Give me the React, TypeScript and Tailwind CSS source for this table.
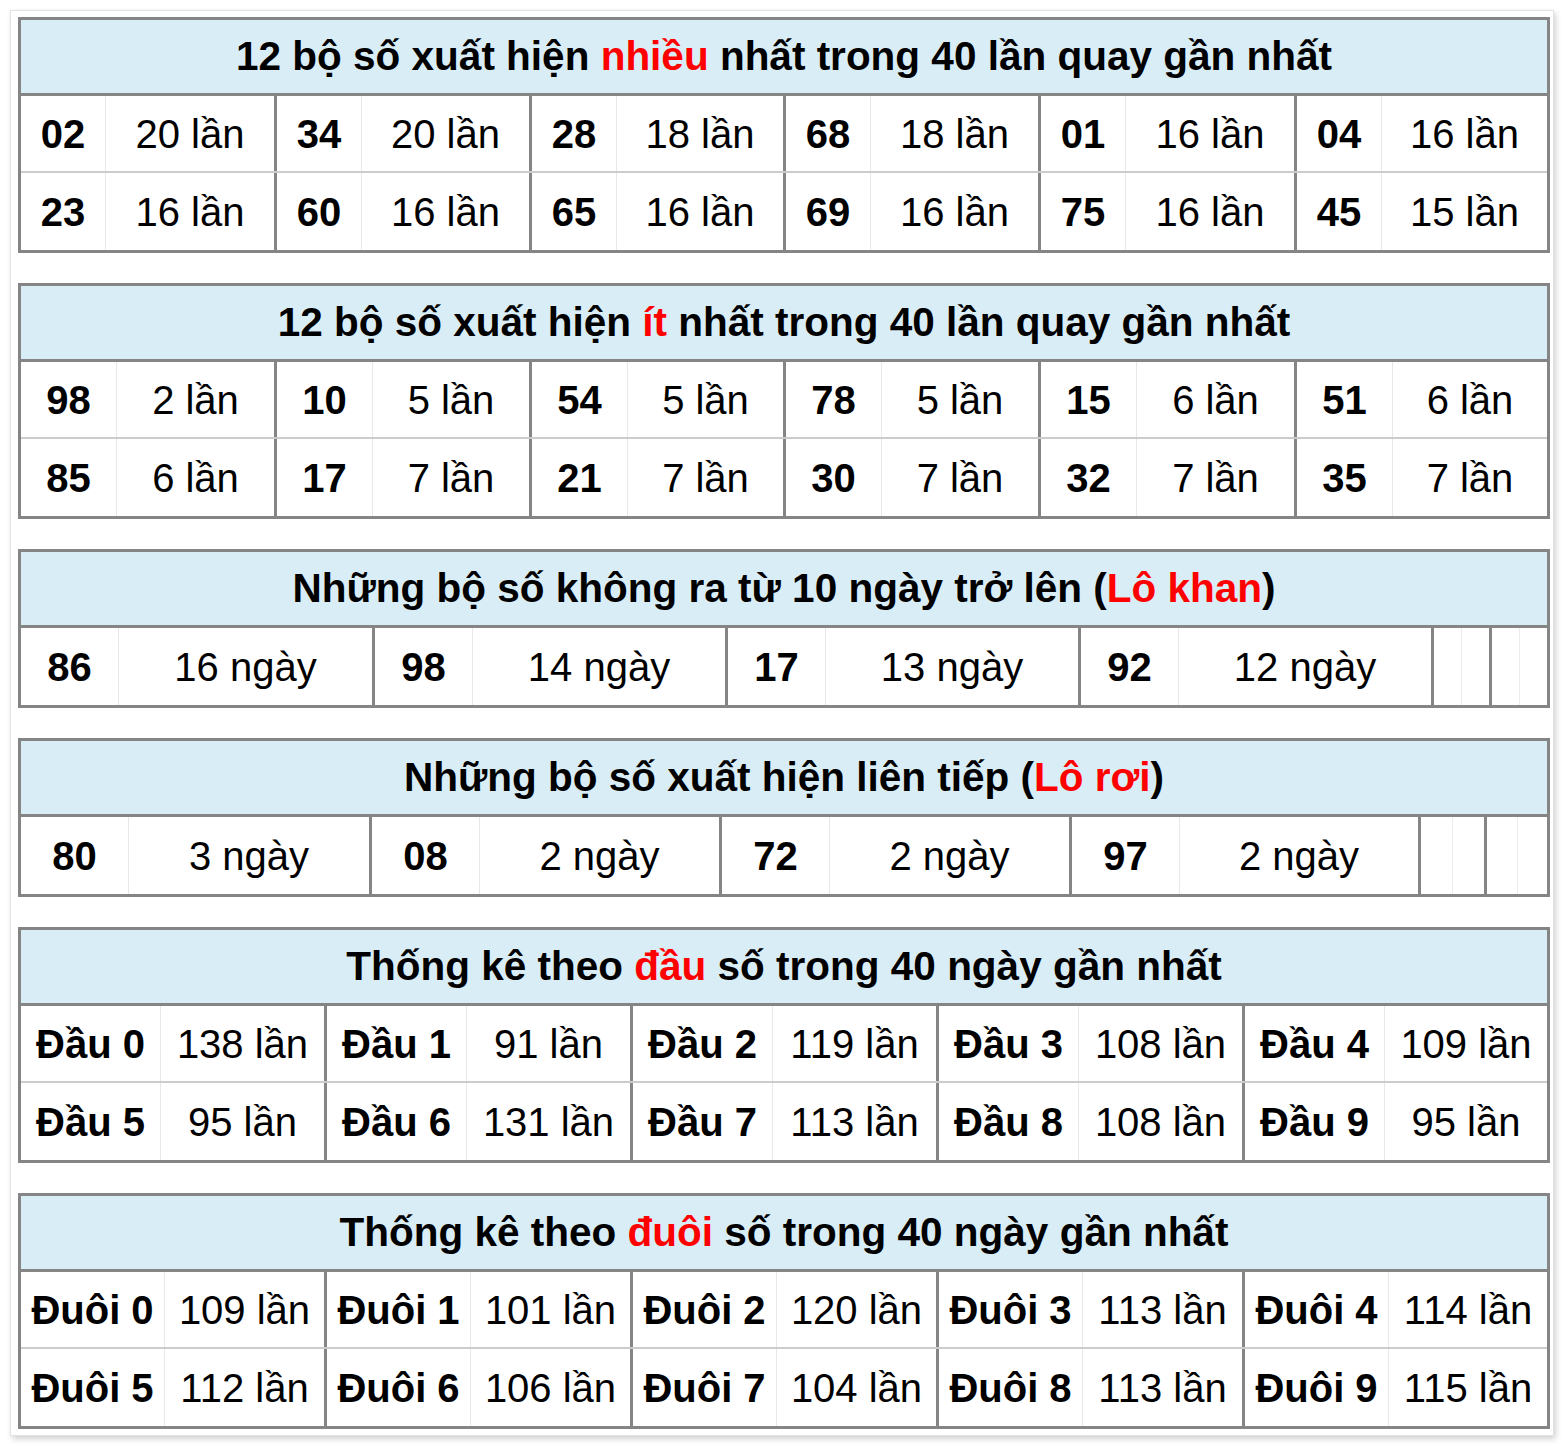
import React from "react"

type Pair = [string, string]

const RED = "text-[#ff0000]"

function Title({ before, red, after }: { before: string; red: string; after: string }) {
  return (
    <div className="h-[76px] flex items-center justify-center bg-[#d9edf7] border-b-[3px] border-[#858585] text-[40.5px] font-bold text-black">
      <span>
        {before}
        <span className={RED}>{red}</span>
        {after}
      </span>
    </div>
  )
}

function Row({
  items,
  numWidth,
  groups,
  empty = [],
  last,
}: {
  items: Pair[]
  numWidth: number
  groups: number[]
  empty?: number[]
  last?: boolean
}) {
  return (
    <div className={`flex h-[77px] ${last ? "" : "border-b-2 border-[#cccccc]"}`}>
      {items.map(([num, val], i) => (
        <div
          key={i}
          className={`flex h-full ${i > 0 ? "border-l-[3px] border-[#858585]" : ""}`}
          style={{ width: groups[i] }}
        >
          <div
            className="flex items-center justify-center font-bold border-r border-[#e8e8e8]"
            style={{ width: numWidth }}
          >
            {num}
          </div>
          <div className="flex-1 flex items-center justify-center">{val}</div>
        </div>
      ))}
      {empty.map((w, i) => (
        <div key={"e" + i} className="flex h-full border-l-[3px] border-[#858585]" style={{ width: w }}>
          <div className="flex-1 border-r border-[#ececec]" />
          <div className="flex-1" />
        </div>
      ))}
    </div>
  )
}

function Table({ children }: { children: React.ReactNode }) {
  return (
    <div className="w-[1532px] border-[3px] border-[#858585] bg-white text-[40px] text-black leading-none">
      {children}
    </div>
  )
}

const six = [253, 255, 254, 255, 256, 253]
const five = [303, 306, 306, 306, 305]

const most: Pair[][] = [
  [["02", "20 lần"], ["34", "20 lần"], ["28", "18 lần"], ["68", "18 lần"], ["01", "16 lần"], ["04", "16 lần"]],
  [["23", "16 lần"], ["60", "16 lần"], ["65", "16 lần"], ["69", "16 lần"], ["75", "16 lần"], ["45", "15 lần"]],
]

const least: Pair[][] = [
  [["98", "2 lần"], ["10", "5 lần"], ["54", "5 lần"], ["78", "5 lần"], ["15", "6 lần"], ["51", "6 lần"]],
  [["85", "6 lần"], ["17", "7 lần"], ["21", "7 lần"], ["30", "7 lần"], ["32", "7 lần"], ["35", "7 lần"]],
]

const khan: Pair[] = [["86", "16 ngày"], ["98", "14 ngày"], ["17", "13 ngày"], ["92", "12 ngày"]]
const roi: Pair[] = [["80", "3 ngày"], ["08", "2 ngày"], ["72", "2 ngày"], ["97", "2 ngày"]]

const dau: Pair[][] = [
  [["Đầu 0", "138 lần"], ["Đầu 1", "91 lần"], ["Đầu 2", "119 lần"], ["Đầu 3", "108 lần"], ["Đầu 4", "109 lần"]],
  [["Đầu 5", "95 lần"], ["Đầu 6", "131 lần"], ["Đầu 7", "113 lần"], ["Đầu 8", "108 lần"], ["Đầu 9", "95 lần"]],
]

const duoi: Pair[][] = [
  [["Đuôi 0", "109 lần"], ["Đuôi 1", "101 lần"], ["Đuôi 2", "120 lần"], ["Đuôi 3", "113 lần"], ["Đuôi 4", "114 lần"]],
  [["Đuôi 5", "112 lần"], ["Đuôi 6", "106 lần"], ["Đuôi 7", "104 lần"], ["Đuôi 8", "113 lần"], ["Đuôi 9", "115 lần"]],
]

export default function App() {
  return (
    <div className="w-[1564px] h-[1446px] bg-white pt-[10px] pl-[10px]" style={{ fontFamily: '"Liberation Sans", Arial, sans-serif' }}>
      <div className="w-[1544px] h-[1426px] border border-[#e2e2e2] shadow-[2px_3px_6px_rgba(0,0,0,0.18)] pl-[7px] pt-[6px] flex flex-col gap-[30px]">
        <Table>
          <Title before="12 bộ số xuất hiện " red="nhiều" after=" nhất trong 40 lần quay gần nhất" />
          <Row items={most[0]} numWidth={85} groups={six} />
          <Row items={most[1]} numWidth={85} groups={six} last />
        </Table>

        <Table>
          <Title before="12 bộ số xuất hiện " red="ít" after=" nhất trong 40 lần quay gần nhất" />
          <Row items={least[0]} numWidth={96} groups={six} />
          <Row items={least[1]} numWidth={96} groups={six} last />
        </Table>

        <Table>
          <Title before="Những bộ số không ra từ 10 ngày trở lên (" red="Lô khan" after=")" />
          <Row items={khan} numWidth={98} groups={[351, 353, 353, 353]} empty={[58, 58]} last />
        </Table>

        <Table>
          <Title before="Những bộ số xuất hiện liên tiếp (" red="Lô rơi" after=")" />
          <Row items={roi} numWidth={108} groups={[348, 350, 350, 349]} empty={[66, 63]} last />
        </Table>

        <Table>
          <Title before="Thống kê theo " red="đầu" after=" số trong 40 ngày gần nhất" />
          <Row items={dau[0]} numWidth={140} groups={five} />
          <Row items={dau[1]} numWidth={140} groups={five} last />
        </Table>

        <Table>
          <Title before="Thống kê theo " red="đuôi" after=" số trong 40 ngày gần nhất" />
          <Row items={duoi[0]} numWidth={144} groups={five} />
          <Row items={duoi[1]} numWidth={144} groups={five} last />
        </Table>
      </div>
    </div>
  )
}
